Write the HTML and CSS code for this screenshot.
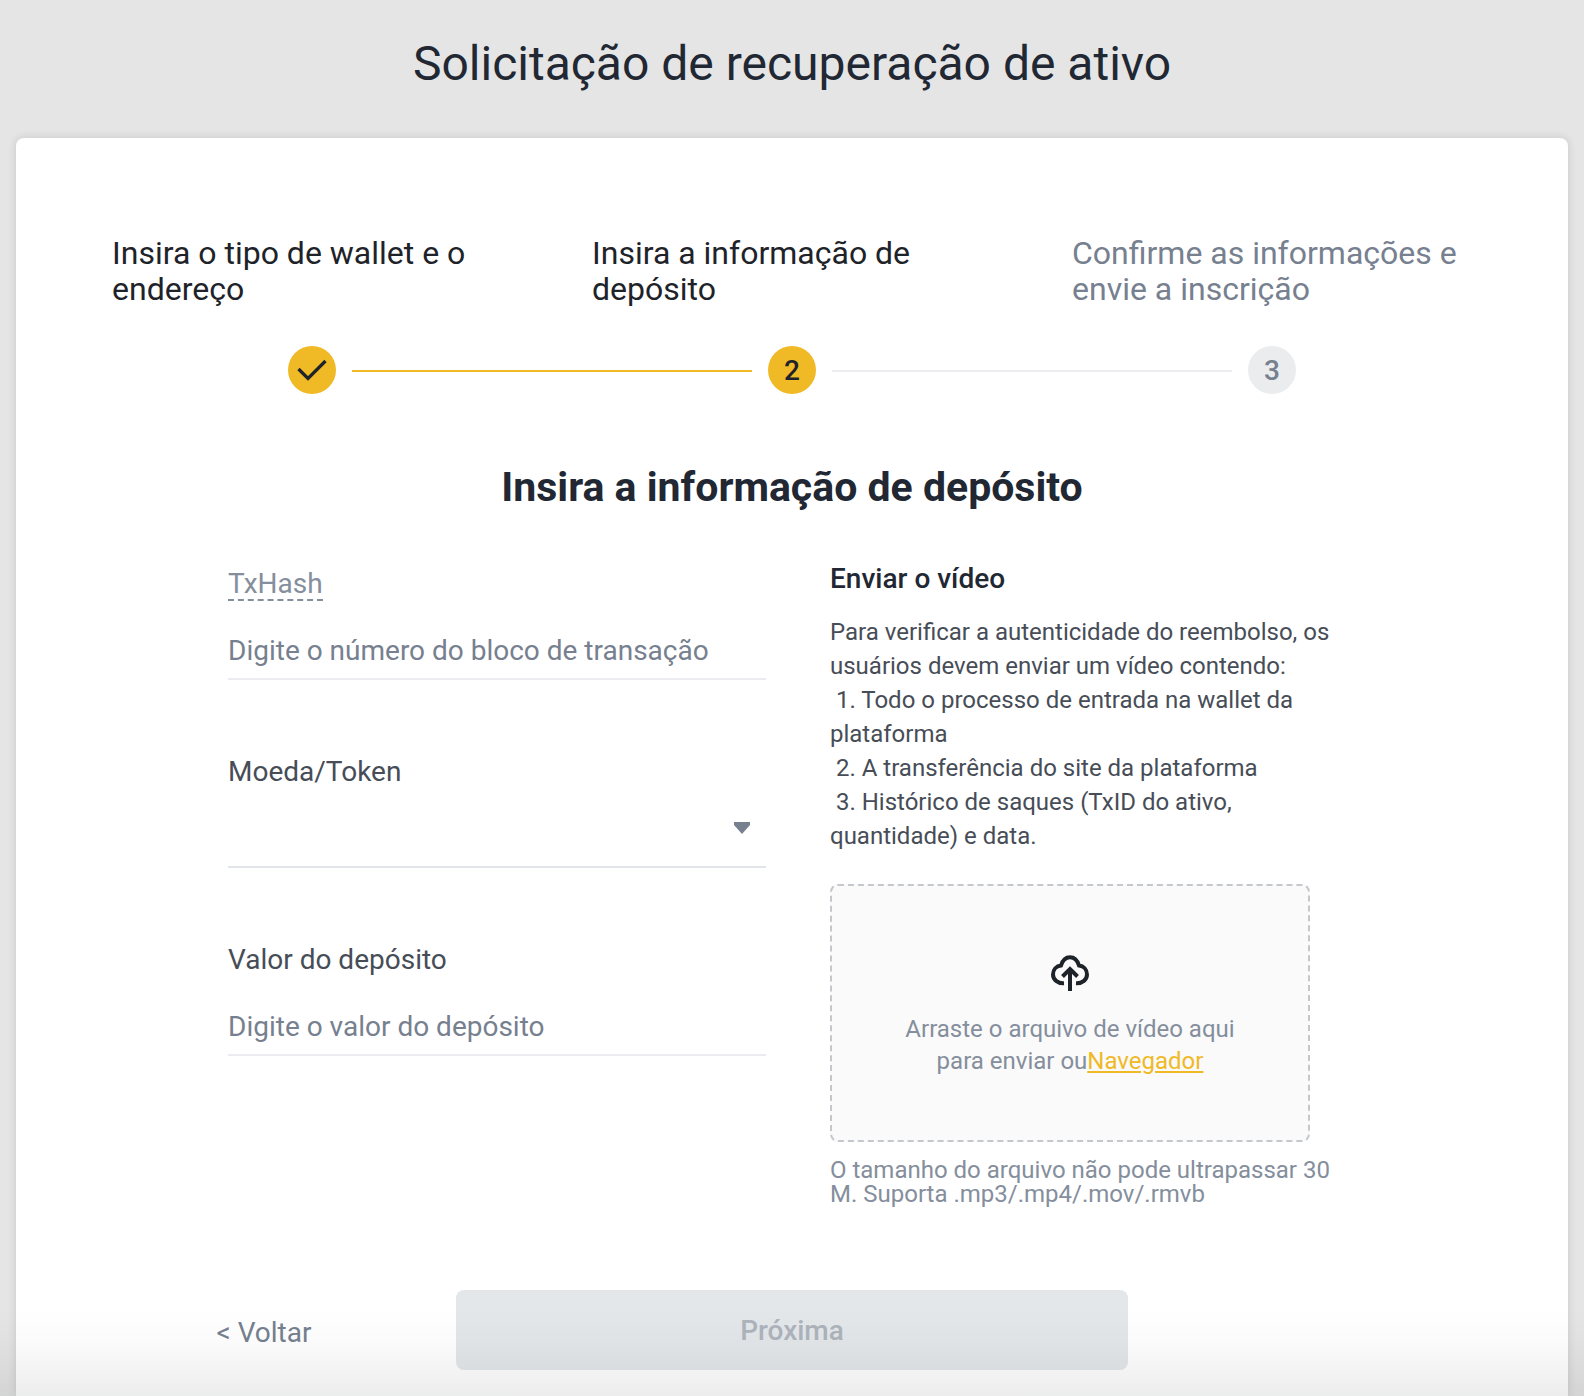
FILE: index.html
```html
<!DOCTYPE html>
<html lang="pt-BR">

<head>
    <meta charset="UTF-8">
    <meta name="viewport" content="width=device-width, initial-scale=1.0">
    <title>Solicitação de recuperação de ativo</title>
    <link rel="stylesheet" href="styles.css">
</head>

<body>
    <header class="header">
        <h1>Solicitação de recuperação de ativo</h1>
    </header>

    <main class="card">
        <ol class="steps">
            <li class="step done">
                <p class="step-label">Insira o tipo de wallet e o endereço</p>
                <div class="step-track">
                    <span class="step-dot">
                        <svg width="32" height="24" viewBox="0 0 32 24" role="img" aria-label="Concluído">
                            <path d="M2.500 11L12 20.500L29.500 3" fill="none" stroke="#1e2329" stroke-width="3.2" />
                        </svg>
                    </span>
                </div>
            </li>
            <li class="step active">
                <p class="step-label">Insira a informação de depósito</p>
                <div class="step-track"><span class="step-dot">2</span></div>
            </li>
            <li class="step">
                <p class="step-label">Confirme as informações e envie a inscrição</p>
                <div class="step-track"><span class="step-dot">3</span></div>
            </li>
        </ol>

        <h2>Insira a informação de depósito</h2>

        <form>
            <div class="columns">
                <div class="fields">
                    <div class="field">
                        <label for="txhash"><span class="hint">TxHash</span></label>
                        <input type="text" id="txhash" name="txhash" placeholder="Digite o número do bloco de transação">
                    </div>
                    <div class="field">
                        <label for="coin">Moeda/Token</label>
                        <div class="select">
                            <select id="coin" name="coin">
                                <option value=""></option>
                            </select>
                            <svg class="arrow" width="16" height="12" viewBox="0 0 16 12" aria-hidden="true">
                                <path d="M0 0H16V3L8 12L0 3Z" fill="#76808f" />
                            </svg>
                        </div>
                    </div>
                    <div class="field">
                        <label for="amount">Valor do depósito</label>
                        <input type="text" id="amount" name="amount" placeholder="Digite o valor do depósito">
                    </div>
                </div>

                <div class="upload">
                    <h3>Enviar o vídeo</h3>
                    <p class="upload-text">Para verificar a autenticidade do reembolso, os usuários devem enviar um vídeo contendo:<br>
                        &nbsp;1. Todo o processo de entrada na wallet da plataforma<br>
                        &nbsp;2. A transferência do site da plataforma<br>
                        &nbsp;3. Histórico de saques (TxID do ativo, quantidade) e data.</p>
                    <div class="dropzone">
                        <svg width="40" height="40" viewBox="0 0 40 40" aria-hidden="true">
                            <g fill="none" stroke="#1e2329" stroke-width="4">
                                <path d="M14 30.2C7.500 30.500 3 26.500 3 21.500C3 16.500 6.500 13 11 12.500C12.500 7.500 15.500 4.200 20 4.200C24.500 4.200 27.500 7.500 29 12.500C33.500 13 37 16.500 37 21.500C37 26.500 32.500 30.500 26 30.200" />
                                <path d="M20 38V16" />
                                <path d="M12.500 23.500L20 16L27.500 23.500" />
                            </g>
                        </svg>
                        <p>Arraste o arquivo de vídeo aqui<br>para enviar ou<a href="#">Navegador</a></p>
                    </div>
                    <p class="upload-note">O tamanho do arquivo não pode ultrapassar 30 M. Suporta .mp3/.mp4/.mov/.rmvb</p>
                </div>
            </div>

            <div class="actions">
                <a class="back" href="#">&lt; Voltar</a>
                <button type="submit" disabled>Próxima</button>
            </div>
        </form>
    </main>
</body>

</html>
```
FILE: styles.css
```css
* {
    margin: 0;
    padding: 0;
    box-sizing: border-box;
}

body {
    display: flex;
    flex-direction: column;
    min-height: 100vh;
    padding: 0 16px;
    background: #e5e5e5;
    color: #474d57;
    font-family: Roboto, "Noto Sans", sans-serif;
}

/* fade at the bottom edge of the window */
body::after {
    content: "";
    position: fixed;
    left: 0;
    right: 0;
    bottom: 0;
    height: 88px;
    background: linear-gradient(rgba(20, 21, 26, 0), rgba(20, 21, 26, 0.02) 40%, rgba(20, 21, 26, 0.08));
    pointer-events: none;
}

h1 {
    padding: 32px 0 42px;
    color: #212833;
    font-size: 48px;
    font-weight: 400;
    line-height: 64px;
    text-align: center;
}

.card {
    flex: 1;
    padding: 97px 56px 24px;
    background: #fff;
    border-radius: 8px 8px 0 0;
    box-shadow: 0 0 8px rgba(24, 32, 51, 0.15);
}

.steps {
    display: grid;
    grid-template-columns: repeat(3, 1fr);
    list-style: none;
}

.step-label {
    padding: 0 36px 0 40px;
    margin-bottom: 39px;
    font-size: 32px;
    line-height: 36px;
    color: #76808f;
}

.done .step-label,
.active .step-label {
    color: #1e2329;
}

.step-track {
    display: flex;
    align-items: center;
    gap: 16px;
}

.step-track::before,
.step-track::after {
    content: "";
    flex: 1;
    height: 2px;
    margin-top: 2px;
    background: #eaecef;
}

.done .step-track::after,
.active .step-track::before {
    background: #f0b926;
}

.step:first-child .step-track::before,
.step:last-child .step-track::after {
    background: none;
}

.step-dot {
    display: flex;
    align-items: center;
    justify-content: center;
    width: 48px;
    height: 48px;
    border-radius: 50%;
    background: #eaecee;
    color: #76808f;
    font-size: 28px;
    font-weight: 500;
}

.done .step-dot,
.active .step-dot {
    background: #f0b926;
    color: #1e2329;
}

h2 {
    margin: 69px 0 47px;
    color: #212833;
    font-size: 41px;
    font-weight: 700;
    line-height: 48px;
    text-align: center;
}

.columns {
    display: flex;
    justify-content: center;
    gap: 64px;
    max-width: 1128px;
    margin: 0 auto;
}

.fields {
    flex: 1;
}

.field {
    display: flex;
    flex-direction: column;
    height: 188px;
}

.field label {
    height: 64px;
    padding-top: 10px;
    font-size: 28px;
    line-height: 32px;
}

.hint {
    display: inline-block;
    color: #848e9c;
    line-height: 30px;
    border-bottom: 2px dashed #848e9c;
}

.field input,
.field select {
    width: 100%;
    height: 58px;
    border: 0;
    border-bottom: 2px solid #eaecef;
    border-radius: 0;
    outline: none;
    background: none;
    color: #474d57;
    font: inherit;
    font-size: 28px;
}

.field input::placeholder {
    color: #76808f;
}

.field select {
    appearance: none;
    border-color: #e1e5e9;
}

.select {
    position: relative;
}

.arrow {
    position: absolute;
    right: 16px;
    top: 12px;
    pointer-events: none;
}

.upload {
    width: 526px;
    padding-top: 4px;
}

h3 {
    margin-bottom: 19px;
    color: #212833;
    font-size: 28px;
    font-weight: 500;
    line-height: 34px;
}

.upload-text {
    margin-bottom: 31px;
    font-size: 24px;
    line-height: 34px;
}

.dropzone {
    display: flex;
    flex-direction: column;
    align-items: center;
    justify-content: center;
    gap: 20px;
    max-width: 480px;
    height: 258px;
    padding-top: 4px;
    border: 2px dashed #c4c7cc;
    border-radius: 8px;
    background: #fafafa;
    color: #848e9c;
    font-size: 24px;
    line-height: 32px;
    text-align: center;
}

.dropzone a {
    color: #f0b926;
}

.upload-note {
    margin-top: 16px;
    color: #848e9c;
    font-size: 24px;
    line-height: 24px;
}

.actions {
    display: grid;
    grid-template-columns: 1fr 672px 1fr;
    align-items: center;
    margin-top: 84px;
}

.back {
    justify-self: center;
    padding-top: 4px;
    color: #76808f;
    font-size: 28px;
    text-decoration: none;
}

.actions button {
    height: 80px;
    border: 0;
    border-radius: 8px;
    background: #e3e7ea;
    color: #aeb4bc;
    font: inherit;
    font-size: 28px;
    font-weight: 500;
}
```
